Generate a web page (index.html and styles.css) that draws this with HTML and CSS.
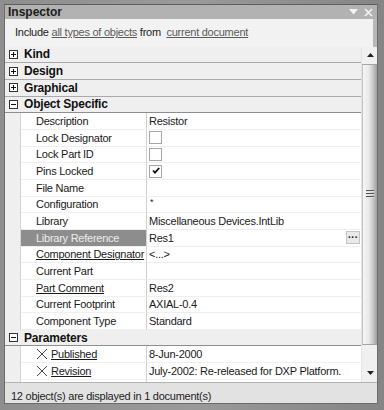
FILE: index.html
```html
<!DOCTYPE html>
<html lang="en">
<head>
    <meta charset="UTF-8">
    <title>Inspector</title>
    <link rel="stylesheet" href="styles.css">
</head>
<body>
    <div class="window">
        <div class="titlebar">
            <span class="title">Inspector</span>
            <span class="tb-icons">
                <svg width="9" height="6" viewBox="0 0 9 6"><path d="M0 0h9L4.5 5.5z" fill="#f4f4f4"/></svg>
                <svg width="9" height="9" viewBox="0 0 9 9"><path d="M1 1l7 7M8 1L1 8" stroke="#f4f4f4" stroke-width="1.6"/></svg>
            </span>
        </div>

        <div class="include">
            Include <a href="#">all types of objects</a> from&nbsp; <a href="#">current document</a>
        </div>

        <div class="content">
            <div class="tree">
                <div class="group"><span class="toggle plus"></span>Kind</div>
                <div class="group"><span class="toggle plus"></span>Design</div>
                <div class="group"><span class="toggle plus"></span>Graphical</div>
                <div class="group open"><span class="toggle"></span>Object Specific</div>

                <div class="prop"><div class="gutter"></div><div class="name">Description</div><div class="value">Resistor</div></div>
                <div class="prop"><div class="gutter"></div><div class="name">Lock Designator</div><div class="value"><span class="check"></span></div></div>
                <div class="prop"><div class="gutter"></div><div class="name">Lock Part ID</div><div class="value"><span class="check"></span></div></div>
                <div class="prop"><div class="gutter"></div><div class="name">Pins Locked</div><div class="value"><span class="check on"><svg width="10" height="10" viewBox="0 0 10 10"><path d="M2 4.5l2 2.2L8.2 2" fill="none" stroke="#111" stroke-width="1.8"/></svg></span></div></div>
                <div class="prop"><div class="gutter"></div><div class="name">File Name</div><div class="value"></div></div>
                <div class="prop"><div class="gutter"></div><div class="name">Configuration</div><div class="value"><span class="star">*</span></div></div>
                <div class="prop"><div class="gutter"></div><div class="name">Library</div><div class="value">Miscellaneous Devices.IntLib</div></div>
                <div class="prop selected"><div class="gutter"></div><div class="name">Library Reference</div><div class="value">Res1<span class="dots">&middot;&middot;&middot;</span></div></div>
                <div class="prop"><div class="gutter"></div><div class="name link">Component Designator</div><div class="value">&lt;...&gt;</div></div>
                <div class="prop"><div class="gutter"></div><div class="name">Current Part</div><div class="value"></div></div>
                <div class="prop"><div class="gutter"></div><div class="name link">Part Comment</div><div class="value">Res2</div></div>
                <div class="prop"><div class="gutter"></div><div class="name">Current Footprint</div><div class="value">AXIAL-0.4</div></div>
                <div class="prop"><div class="gutter"></div><div class="name">Component Type</div><div class="value">Standard</div></div>

                <div class="group open"><span class="toggle"></span>Parameters</div>

                <div class="prop"><div class="gutter"></div><div class="name"><svg class="xicon" width="12" height="12" viewBox="0 0 12 12"><path d="M1 1l10 10M11 1L1 11" stroke="#444" stroke-width="1"/></svg><span class="link">Published</span></div><div class="value">8-Jun-2000</div></div>
                <div class="prop"><div class="gutter"></div><div class="name"><svg class="xicon" width="12" height="12" viewBox="0 0 12 12"><path d="M1 1l10 10M11 1L1 11" stroke="#444" stroke-width="1"/></svg><span class="link">Revision</span></div><div class="value">July-2002: Re-released for DXP Platform.</div></div>
                <div class="prop"><div class="gutter"></div><div class="name"><svg class="xicon" width="12" height="12" viewBox="0 0 12 12"><path d="M1 1l10 10M11 1L1 11" stroke="#444" stroke-width="1"/></svg><span class="link">Publisher</span></div><div class="value">Altium Limited</div></div>
            </div>

            <div class="scrollbar">
                <div class="sb-btn"><svg width="7" height="4" viewBox="0 0 7 4"><path d="M0 4h7L3.5 0z" fill="#222"/></svg></div>
                <div class="sb-thumb"><span class="grip"></span></div>
                <div class="sb-track"></div>
                <div class="sb-btn"><svg width="7" height="4" viewBox="0 0 7 4"><path d="M0 0h7L3.5 4z" fill="#222"/></svg></div>
            </div>
        </div>

        <div class="status">12 object(s) are displayed in 1 document(s)</div>
    </div>
</body>
</html>
```

FILE: styles.css
```css
body {
    margin: 0;
    padding: 4px 0 0 4px;
    width: 384px;
    height: 410px;
    box-sizing: border-box;
    overflow: hidden;
    background: linear-gradient(90deg, #8e8e8e 0%, #9a9a9a 50%, #858585 100%);
    font-family: "Liberation Sans", Arial, sans-serif;
    font-size: 11px;
    letter-spacing: -0.25px;
    color: #1a1a1a;
}

.window {
    width: 372px;
    background: #f0f0f0;
    border: 1px solid #6c6c6c;
    border-top-color: #5e5e5e;
}

.titlebar {
    height: 14px;
    background: #b2b2b2;
    display: flex;
    align-items: center;
    justify-content: space-between;
    padding: 0 4px 0 3px;
}

.title {
    font-weight: bold;
    font-size: 12px;
    letter-spacing: 0;
    color: #1c1c1c;
}

.tb-icons {
    display: flex;
    align-items: center;
    gap: 6px;
}

.include {
    height: 27.67px;
    box-sizing: border-box;
    padding: 7px 0 0 10px;
    background: #f2f2f2;
    color: #222;
    border-right: 4px solid #b8b8b8;
}

.include a {
    color: #5a5a5a;
    text-decoration: underline;
}

.content {
    display: flex;
    height: 335.33px;
}

.tree {
    flex: 1;
    overflow: hidden;
    background: #f0f0f0;
}

.group {
    height: 16.67px;
    box-sizing: border-box;
    display: flex;
    align-items: center;
    padding-left: 4px;
    font-weight: bold;
    font-size: 12px;
    letter-spacing: -0.2px;
    color: #111;
    border-bottom: 1px solid #a9a9a9;
    background: #efefef;
}

.group.open {
    border-bottom-color: #8e8e8e;
}

.toggle {
    position: relative;
    width: 7px;
    height: 7px;
    border: 1px solid #333;
    background: #fff;
    margin-right: 6px;
}

.toggle::before,
.toggle.plus::after {
    content: "";
    position: absolute;
    background: #111;
}

.toggle::before {
    left: 1px;
    top: 3px;
    width: 5px;
    height: 1px;
}

.toggle.plus::after {
    left: 3px;
    top: 1px;
    width: 1px;
    height: 5px;
}

.prop {
    height: 16.67px;
    display: grid;
    grid-template-columns: 16px 126px 1fr;
}

.gutter {
    background: #efefef;
    border-right: 1px solid #d4d4d4;
}

.name,
.value {
    display: flex;
    align-items: center;
    background: #fff;
    border-bottom: 1px solid #efefef;
    white-space: nowrap;
    overflow: hidden;
}

.name {
    padding-left: 15px;
    border-right: 1px solid #cfcfcf;
}

.value {
    padding-left: 2px;
}

.link {
    text-decoration: underline;
}

.selected .name {
    background: #8d8d8d;
    color: #ececec;
}

.xicon {
    margin-right: 3px;
    flex-shrink: 0;
}

.check {
    width: 11px;
    height: 11px;
    border: 1px solid #a6a6a6;
    background: #fff;
    display: flex;
    align-items: center;
    justify-content: center;
}

.star {
    font-size: 9px;
    margin-top: -4px;
    padding-left: 1px;
}

.dots {
    margin-left: auto;
    margin-right: 1px;
    width: 14px;
    height: 13px;
    background: #e9e9e9;
    border: 1px solid #c4c4c4;
    box-sizing: border-box;
    font-weight: bold;
    font-size: 10px;
    letter-spacing: 0;
    line-height: 11px;
    text-align: center;
}

.scrollbar {
    width: 15px;
    display: flex;
    flex-direction: column;
    background: #f0f0f0;
    border-left: 1px solid #e4e4e4;
}

.sb-btn {
    height: 17px;
    display: flex;
    align-items: center;
    justify-content: center;
    padding-left: 2px;
}

.sb-thumb {
    height: 281px;
    box-sizing: border-box;
    border: 1px solid #a4a4a4;
    border-left-color: #c2c2c2;
    background: linear-gradient(90deg, #f6f6f6 0%, #e8e8e8 45%, #c9c9c9 75%, #a9a9a9 100%);
    display: flex;
    justify-content: center;
}

.grip {
    margin-top: 125px;
    width: 8px;
    height: 9px;
    background: repeating-linear-gradient(180deg, #555 0, #555 1px, #e0e0e0 1px, #e0e0e0 2px, transparent 2px, transparent 3px);
}

.sb-track {
    flex: 1;
}

.status {
    height: 21px;
    box-sizing: border-box;
    padding: 7px 0 0 6px;
    background: #e2e2e2;
    border-top: 1px solid #b4b4b4;
    color: #222;
}
```
